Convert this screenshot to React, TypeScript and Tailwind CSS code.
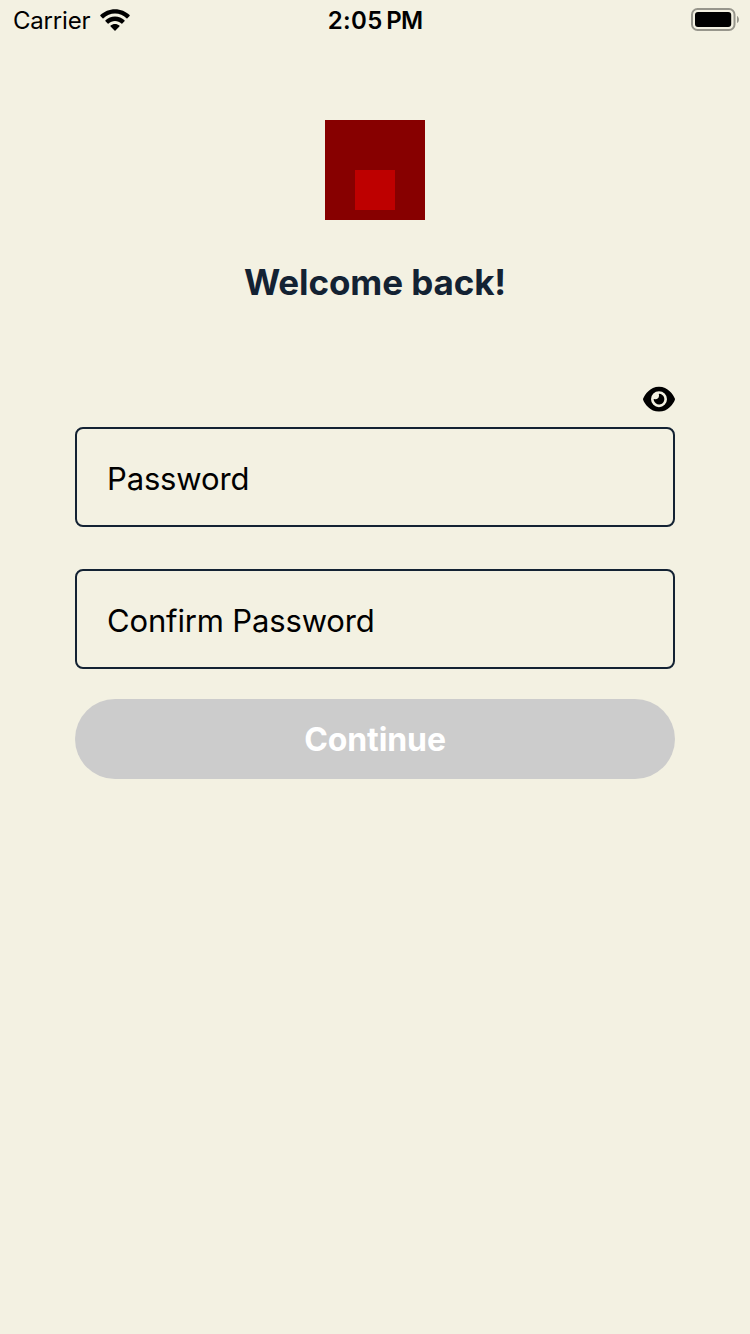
import { FaEye } from "react-icons/fa6";

function WifiIcon() {
  return (
    <svg width="30" height="22" viewBox="0 0 30 22" fill="black">
      <path d="M15 0.2C20.7 0.2 25.9 2.4 29.6 6.1C29.9 6.4 29.9 6.8 29.6 7.1L27.4 9.3C27.1 9.6 26.8 9.6 26.5 9.3C23.5 6.4 19.4 4.6 15 4.6S6.5 6.4 3.5 9.3C3.2 9.6 2.9 9.6 2.6 9.3L0.4 7.1C0.1 6.8 0.1 6.4 0.4 6.1C4.1 2.4 9.3 0.2 15 0.2Z" />
      <path d="M15 7.6C18.7 7.6 22 9 24.5 11.3C24.8 11.6 24.8 12 24.5 12.3L22.3 14.4C22 14.7 21.7 14.7 21.4 14.4C19.7 12.9 17.5 12 15 12S10.3 12.9 8.6 14.4C8.3 14.7 8 14.7 7.7 14.4L5.5 12.3C5.2 12 5.2 11.6 5.5 11.3C8 9 11.3 7.6 15 7.6Z" />
      <path d="M15 15C16.7 15 18.2 15.6 19.4 16.6C19.7 16.9 19.7 17.3 19.4 17.6L15.5 21.4C15.2 21.7 14.8 21.7 14.5 21.4L10.6 17.6C10.3 17.3 10.3 16.9 10.6 16.6C11.8 15.6 13.3 15 15 15Z" />
    </svg>
  );
}

function BatteryIcon() {
  return (
    <svg width="50" height="24" viewBox="0 0 50 24">
      <rect x="1" y="1" width="42.5" height="21" rx="5.5" fill="none" stroke="#97968c" strokeWidth="2" />
      <rect x="4" y="4" width="36.2" height="15" rx="3" fill="black" />
      <path d="M46 8C48.6 9 48.6 14 46 15Z" fill="#97968c" />
    </svg>
  );
}

function StatusBar() {
  return (
    <header className="grid h-10 grid-cols-3 items-center text-[24px] text-black">
      <div className="flex items-center gap-[10px] pl-[13px]">
        <span className="w-[76.5px] pt-[2px] leading-[38px] tracking-[-0.2px]">Carrier</span>
        <WifiIcon />
      </div>
      <span className="pt-[2px] text-center leading-[38px] font-semibold tracking-[0.3px] [word-spacing:-2.6px]">
        2:05 <span className="tracking-[-0.9px]">PM</span>
      </span>
      <div className="flex justify-end pr-[9px]">
        <BatteryIcon />
      </div>
    </header>
  );
}

function Field({ label }: { label: string }) {
  return (
    <input
      type="password"
      placeholder={label}
      aria-label={label}
      className="h-[100px] w-full rounded-lg border-2 border-[#132233] bg-transparent px-[30px] pt-0.5 text-[31px] tracking-[-0.15px] text-black outline-none placeholder:text-black placeholder:opacity-100"
    />
  );
}

export default function App() {
  return (
    <div className="min-h-[1334px] w-full bg-[#f3f1e2] font-['Inter','Liberation_Sans',sans-serif]">
      <StatusBar />
      <main className="mx-auto flex w-[600px] flex-col items-center pt-20">
        <div className="flex size-[100px] items-end justify-center bg-[#870000] pb-[10px]">
          <div className="size-10 bg-[#be0000]" />
        </div>
        <h1 className="mt-10 text-[35px] leading-[44px] font-bold tracking-[-0.1px] text-[#132233]">Welcome back!</h1>
        <button type="button" aria-label="Show password" className="mt-[81px] flex h-[28px] self-end">
          <FaEye className="h-[28.4px] w-8" />
        </button>
        <form className="mt-[14px] flex w-full flex-col">
          <Field label="Password" />
          <div className="h-[42px]" />
          <Field label="Confirm Password" />
          <button type="button" className="mt-[30px] h-20 w-full rounded-full bg-[#cccccc] pt-0.5 text-[32px] font-bold tracking-[-0.1px] text-white">
            Continue
          </button>
        </form>
      </main>
    </div>
  );
}
